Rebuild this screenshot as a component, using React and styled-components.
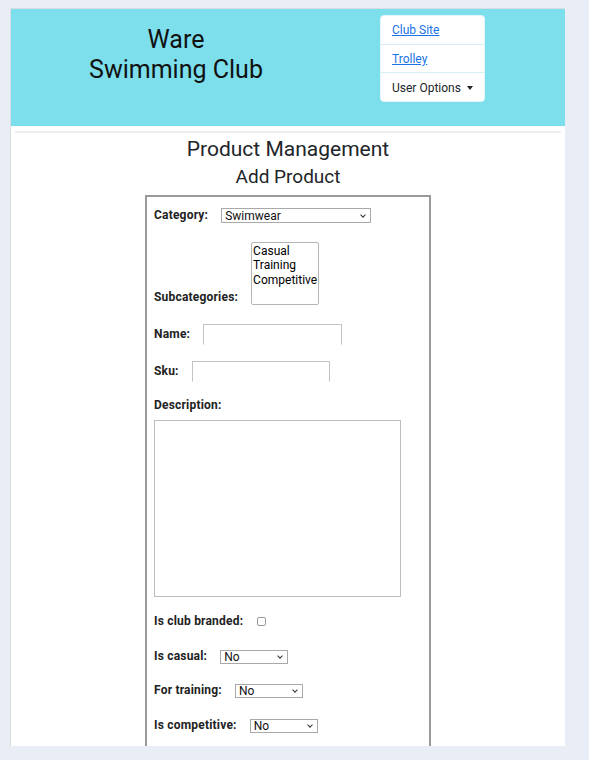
import React from "react";
import styled, { createGlobalStyle } from "styled-components";

const GlobalStyle = createGlobalStyle`
  body {
    margin: 0;
    background: #e9edf5;
    font-family: Roboto, "Liberation Sans", sans-serif;
    color: #212529;
  }
`;

// Page frame
const Page = styled.div`
  padding: 8px 24px 0 10px;
`;

const Frame = styled.div`
  width: 554px;
  height: 737px;
  overflow: hidden;
  background: #fff;
  border-top: 1px solid #d8dce3;
  border-left: 1px solid #d8dce3;
`;

// Header
const Header = styled.header`
  display: flex;
  height: 117px;
  background: #7ddfec;
  border-bottom: 5px solid #fff;
  box-shadow: 0 6px 0 -4px #eceef0;
`;

const Brand = styled.h1`
  width: 330px;
  margin: 16px 0 0;
  font-size: 25px;
  font-weight: 400;
  line-height: 30px;
  text-align: center;
  color: #111;
`;

const NavCard = styled.nav`
  margin: 6px 0 0 39px;
  width: 103px;
  height: 85px;
  background: #fff;
  border: 1px solid #e3f6f9;
  border-radius: 4px;
  display: flex;
  flex-direction: column;
`;

const NavItem = styled.div`
  flex: 1;
  display: flex;
  align-items: center;
  padding: 1px 0 0 11px;
  font-size: 12px;
  border-top: ${(p) => (p.$first ? "none" : "1px solid #d6f1f5")};
`;

const NavLink = styled.a`
  color: #1a73e8;
  text-decoration: underline;
`;

const Caret = styled.span`
  margin-left: 6px;
  border-top: 4px solid #222;
  border-left: 3.5px solid transparent;
  border-right: 3.5px solid transparent;
`;

// Content
const Content = styled.main`
  display: flex;
  flex-direction: column;
  align-items: center;
  padding-top: 5px;
`;

const PageTitle = styled.h2`
  margin: 0;
  font-size: 21px;
  font-weight: 400;
  line-height: 26px;
`;

const SubTitle = styled.h3`
  margin: 3px 0 0;
  font-size: 19px;
  font-weight: 400;
  line-height: 24px;
`;

const FormBox = styled.form`
  margin-top: 6px;
  width: 268px;
  border: 2px solid #9a9a9a;
  padding: 11px 7px 40px;
`;

const Row = styled.div`
  display: flex;
  align-items: ${(p) => p.$align || "center"};
  margin-top: ${(p) => p.$top || 0}px;
`;

const Label = styled.label`
  font-size: 12px;
  font-weight: 700;
  line-height: 15px;
  letter-spacing: 0.2px;
  margin-right: ${(p) => p.$gap || 13}px;
  color: #222;
`;

const SelectWrap = styled.span`
  position: relative;
  display: inline-flex;

  &::after {
    content: "";
    position: absolute;
    right: 6px;
    top: 50%;
    width: 3px;
    height: 3px;
    margin-top: -3px;
    border-right: 1px solid #333;
    border-bottom: 1px solid #333;
    transform: rotate(45deg);
    pointer-events: none;
  }
`;

const Select = styled.select`
  appearance: none;
  box-sizing: border-box;
  width: ${(p) => p.$width}px;
  height: ${(p) => p.$height || 14}px;
  margin: 0;
  padding: 0 0 0 3px;
  font-family: Roboto, "Liberation Sans", sans-serif;
  font-size: 12px;
  line-height: 12px;
  color: #111;
  background: #fff;
  border: 1px solid #a9a9a9;
  border-radius: 0;
`;

const ListBox = styled.select`
  box-sizing: border-box;
  width: 68px;
  height: 63px;
  margin: 0;
  padding: 1px 0;
  font-family: Roboto, "Liberation Sans", sans-serif;
  font-size: 12px;
  line-height: 15px;
  border: 1px solid #b5b5b5;
  overflow: hidden;
  option {
    padding: 0 1px;
  }
`;

const TextInput = styled.input`
  width: ${(p) => p.$width}px;
  height: 21px;
  margin: 0;
  box-sizing: border-box;
  border: 1px solid #c2c2c2;
  border-bottom-color: transparent;
`;

const TextArea = styled.textarea`
  display: block;
  width: 247px;
  height: 177px;
  box-sizing: border-box;
  margin: 7px 0 0;
  border: 1px solid #bdbdbd;
  resize: none;
`;

const Check = styled.input`
  appearance: none;
  margin: 0 0 0 1px;
  width: 9px;
  height: 9px;
  border: 1px solid #9a9a9a;
  border-radius: 2px;
  background: #fff;
`;

const Dropdown = ({ id, width, height, value, options }) => (
  <SelectWrap>
    <Select id={id} $width={width} $height={height} defaultValue={value}>
      {options.map((o) => (
        <option key={o}>{o}</option>
      ))}
    </Select>
  </SelectWrap>
);

const YesNo = ({ id }) => (
  <Dropdown id={id} width={68} value="No" options={["No", "Yes"]} />
);

export default function App() {
  return (
    <Page>
      <GlobalStyle />
      <Frame>
        <Header>
          <Brand>
            Ware
            <br />
            Swimming Club
          </Brand>
          <NavCard>
            <NavItem $first>
              <NavLink href="#">Club Site</NavLink>
            </NavItem>
            <NavItem>
              <NavLink href="#">Trolley</NavLink>
            </NavItem>
            <NavItem>
              User Options
              <Caret />
            </NavItem>
          </NavCard>
        </Header>

        <Content>
          <PageTitle>Product Management</PageTitle>
          <SubTitle>Add Product</SubTitle>
          <FormBox>
            <Row>
              <Label htmlFor="category">Category:</Label>
              <Dropdown
                id="category"
                width={150}
                height={15}
                value="Swimwear"
                options={["Swimwear", "Equipment", "Accessories"]}
              />
            </Row>
            <Row $top={19} $align="flex-end">
              <Label htmlFor="subcategories">Subcategories:</Label>
              <ListBox id="subcategories" multiple size={3}>
                <option>Casual</option>
                <option>Training</option>
                <option>Competitive</option>
              </ListBox>
            </Row>
            <Row $top={19}>
              <Label htmlFor="name">Name:</Label>
              <TextInput id="name" $width={139} />
            </Row>
            <Row $top={16}>
              <Label htmlFor="sku">Sku:</Label>
              <TextInput id="sku" $width={138} />
            </Row>
            <Row $top={16}>
              <Label htmlFor="description">Description:</Label>
            </Row>
            <TextArea id="description" />
            <Row $top={17}>
              <Label htmlFor="branded">Is club branded:</Label>
              <Check id="branded" type="checkbox" />
            </Row>
            <Row $top={20}>
              <Label htmlFor="casual">Is casual:</Label>
              <YesNo id="casual" />
            </Row>
            <Row $top={19}>
              <Label htmlFor="training">For training:</Label>
              <YesNo id="training" />
            </Row>
            <Row $top={20}>
              <Label htmlFor="competitive">Is competitive:</Label>
              <YesNo id="competitive" />
            </Row>
          </FormBox>
        </Content>
      </Frame>
    </Page>
  );
}
